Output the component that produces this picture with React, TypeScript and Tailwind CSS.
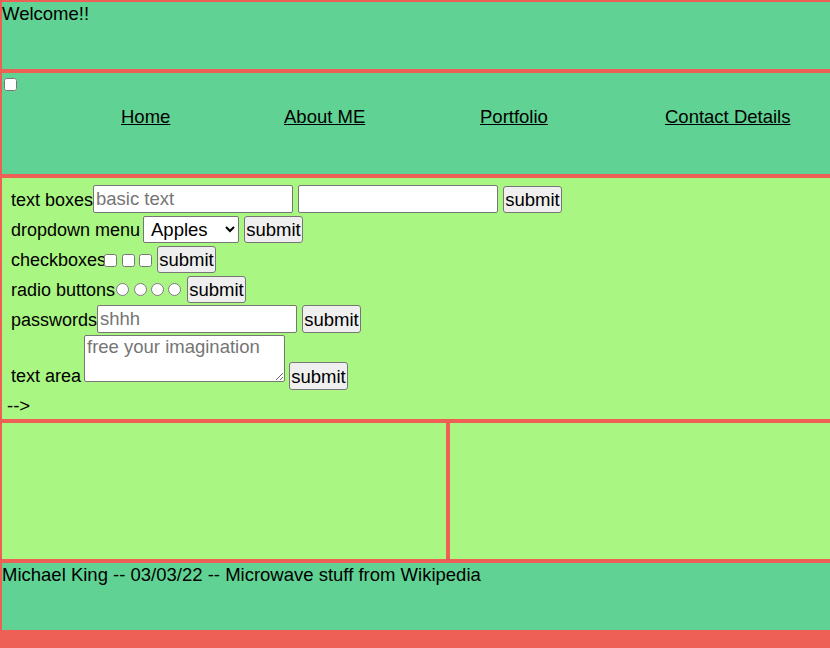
import React from "react";

const btn =
  "h-[27px] w-[59px] shrink-0 bg-[#efefef] border border-[#767676] rounded-[3px] text-[18.5px] leading-[21px] text-black flex items-center justify-center";
const txt =
  "h-[28px] w-[200px] shrink-0 bg-white border border-[#767676] rounded-[2px] px-[2px] text-[18.5px] text-black placeholder:text-[#757575] outline-none";
const lbl = "shrink-0 whitespace-nowrap mt-[2px] text-[18px]";

export default function App() {
  return (
    <div className="w-[830px] h-[648px] overflow-hidden bg-[#ee6055] font-['Liberation_Sans',Arial,sans-serif] text-[18.5px] leading-[21px] text-black">
      <div className="w-[896px]">
        <header className="h-[71px] border-2 border-[#ee6055] bg-[#60d394] leading-[24px]">
          Welcome!!
        </header>
        <nav className="h-[105px] border-2 border-[#ee6055] bg-[#60d394]">
          <input type="checkbox" className="block m-0 ml-[2px] mt-[5px] w-[13px] h-[13px]" />
          <ul className="flex pl-[119px] mt-[14px] h-[24px] leading-[24px]">
            <li className="w-[163px] shrink-0"><a href="#" className="underline">Home</a></li>
            <li className="w-[196px] shrink-0"><a href="#" className="underline">About ME</a></li>
            <li className="w-[185px] shrink-0"><a href="#" className="underline">Portfolio</a></li>
            <li className="shrink-0"><a href="#" className="underline">Contact Details</a></li>
          </ul>
        </nav>
        <section className="h-[245px] border-2 border-[#ee6055] bg-[#aaf683] pl-[5px] pt-[6px]">
          <form className="ml-[4px]" onSubmit={(e) => e.preventDefault()}>
            <div className="flex items-center h-[30px]">
              <span className={lbl + " w-[82px]"}>text boxes</span>
              <input type="text" placeholder="basic text" className={txt} />
              <input type="text" className={txt + " ml-[5px]"} />
              <button type="submit" className={btn + " ml-[5px]"}>submit</button>
            </div>
            <div className="flex items-center h-[30px]">
              <span className={lbl + " w-[132px]"}>dropdown menu</span>
              <select className="h-[27px] w-[96px] shrink-0 bg-white border border-[#767676] rounded-[2px] text-[18.5px] text-black pl-[3px]">
                <option>Apples</option>
                <option>Bananas</option>
                <option>Cherries</option>
              </select>
              <button type="submit" className={btn + " ml-[5px]"}>submit</button>
            </div>
            <div className="flex items-center h-[30px]">
              <span className={lbl + " w-[93px]"}>checkboxes</span>
              <input type="checkbox" className="m-0 mt-[3px] w-[13px] h-[13px]" />
              <input type="checkbox" className="m-0 mt-[3px] ml-[5px] w-[13px] h-[13px]" />
              <input type="checkbox" className="m-0 mt-[3px] ml-[4px] w-[13px] h-[13px]" />
              <button type="submit" className={btn + " ml-[5px]"}>submit</button>
            </div>
            <div className="flex items-center h-[30px]">
              <span className={lbl + " w-[105px]"}>radio buttons</span>
              <input type="radio" name="r" className="m-0 mt-[1px] w-[13px] h-[13px]" />
              <input type="radio" name="r" className="m-0 mt-[1px] ml-[5px] w-[13px] h-[13px]" />
              <input type="radio" name="r" className="m-0 mt-[1px] ml-[4px] w-[13px] h-[13px]" />
              <input type="radio" name="r" className="m-0 mt-[1px] ml-[4px] w-[13px] h-[13px]" />
              <button type="submit" className={btn + " ml-[6px]"}>submit</button>
            </div>
            <div className="flex items-center h-[30px]">
              <span className={lbl + " w-[86px]"}>passwords</span>
              <input type="password" placeholder="shhh" className={txt} />
              <button type="submit" className={btn + " ml-[5px] h-[28px]"}>submit</button>
            </div>
            <div className="flex items-start h-[56px]">
              <span className="w-[73px] shrink-0 whitespace-nowrap mt-[32px] text-[18px]">text area</span>
              <textarea
                placeholder="free your imagination"
                className="mt-[1px] h-[47px] w-[201px] shrink-0 bg-white border border-[#767676] rounded-[2px] px-[2px] text-[18.5px] leading-[22px] text-black placeholder:text-[#757575] outline-none"
              />
              <button type="submit" className={btn + " ml-[4px] mt-[28px] h-[28px]"}>submit</button>
            </div>
          </form>
          <div className="mt-[5px]">--&gt;</div>
        </section>
        <div className="flex h-[140px]">
          <div className="w-[448px] shrink-0 border-2 border-[#ee6055] bg-[#aaf683]" />
          <div className="w-[448px] shrink-0 border-2 border-[#ee6055] bg-[#aaf683]" />
        </div>
        <footer className="h-[71px] border-2 border-[#ee6055] bg-[#60d394] leading-[24px]">
          Michael King -- 03/03/22 -- Microwave stuff from Wikipedia
        </footer>
      </div>
    </div>
  );
}
